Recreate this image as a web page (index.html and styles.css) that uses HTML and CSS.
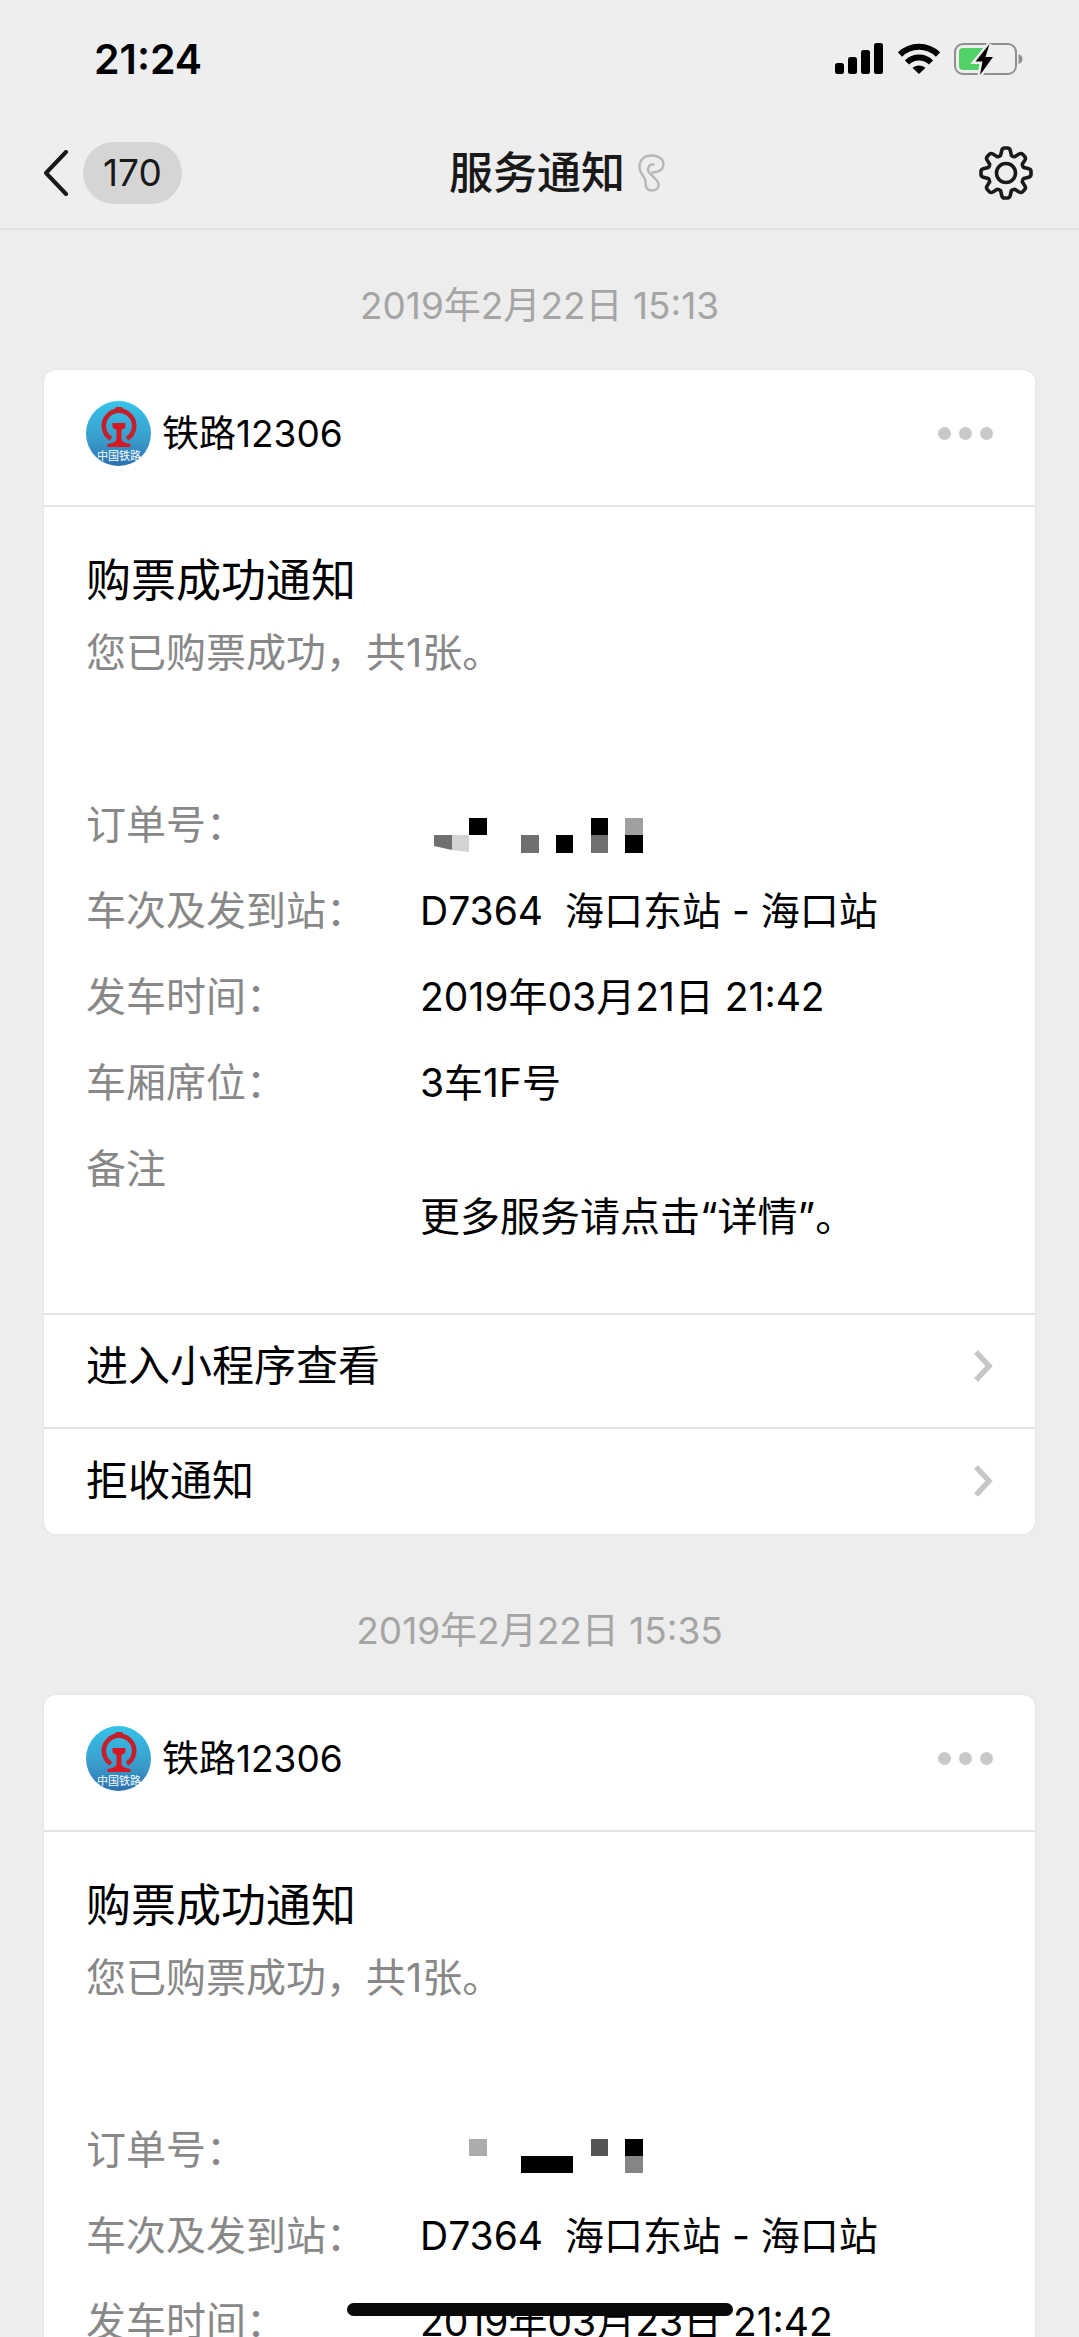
FILE: index.html
```html
<!DOCTYPE html>
<html lang="zh-CN">
<head>
<meta charset="utf-8">
<meta name="viewport" content="width=device-width, initial-scale=1">
<title>服务通知</title>
<link rel="stylesheet" href="styles.css">
</head>
<body>
<svg class="defs" width="0" height="0" aria-hidden="true">
  <defs>
    <linearGradient id="sky" x1="0" y1="0" x2="0" y2="1">
      <stop offset="0" stop-color="#35c3ea"/>
      <stop offset="0.6" stop-color="#3a9ccb"/>
      <stop offset="1" stop-color="#2b70b0"/>
    </linearGradient>
    <symbol id="rail" viewBox="0 0 65 65">
      <circle cx="32.5" cy="32.5" r="32.5" fill="url(#sky)"/>
      <path d="M25 37.700A15.200 15.200 0 1 1 41 37.700" fill="none" stroke="#c4202c" stroke-width="4.600"/>
      <path d="M27.500 9.500L30 6H36L38.500 9.500Z" fill="#c4202c"/>
      <path d="M26.500 22H39.500V26.500L35.500 29V38.500Q36 41.500 44.500 43V46H21.500V43Q30 41.500 30.500 38.500V29L26.500 26.500Z" fill="#d51822"/>
      <text x="33" y="59" text-anchor="middle" font-size="11" fill="#fff">中国铁路</text>
    </symbol>
    <symbol id="chevron" viewBox="0 0 20 34">
      <path d="M3 3L16 17L3 31" fill="none" stroke="#c7c7c9" stroke-width="5.500"/>
    </symbol>
  </defs>
</svg>

<div class="screen">
  <div class="status">
    <time class="clock">21:24</time>
    <div class="indicators">
      <svg width="49" height="32" viewBox="0 0 49 32" role="img" aria-label="信号">
        <rect x="0" y="20" width="9" height="11" rx="2.500"/>
        <rect x="13" y="14" width="9" height="17" rx="2.500"/>
        <rect x="26" y="7" width="9" height="24" rx="2.500"/>
        <rect x="39" y="0" width="9" height="31" rx="2.500"/>
      </svg>
      <svg width="42" height="32" viewBox="0 0 42 32" role="img" aria-label="Wi-Fi">
        <g fill="none" stroke="#000" stroke-width="6">
          <path d="M2 11.500A27 27 0 0 1 40 11.500"/>
          <path d="M9 19.500A17 17 0 0 1 33 19.500"/>
        </g>
        <path d="M21 31L14.500 24.800Q21 20 27.500 24.800Z"/>
      </svg>
      <svg width="69" height="36" viewBox="0 0 69 36" role="img" aria-label="正在充电">
        <rect x="1" y="3" width="61" height="30" rx="8" fill="none" stroke="#8f8f8f" stroke-width="2"/>
        <path d="M64.500 13Q68.500 14.500 68.500 18T64.500 23Z" fill="#8f8f8f"/>
        <rect x="5" y="7" width="26" height="22" rx="4" fill="#50d267"/>
        <path d="M35.500 3L21.500 20.500H28.500L26 34L39 16H31.500Z" fill="#000" stroke="#eee" stroke-width="5" paint-order="stroke"/>
      </svg>
    </div>
  </div>

  <header class="nav">
    <button class="back" type="button" aria-label="返回，170条未读">
      <svg width="26" height="46" viewBox="0 0 26 46"><path d="M23 2L3 23L23 44" fill="none" stroke="#191919" stroke-width="4" stroke-linecap="round" stroke-linejoin="round"/></svg>
      <span class="count">170</span>
    </button>
    <h1 class="heading">服务通知
      <svg width="27" height="38" viewBox="0 0 27 38" role="img" aria-label="听筒模式"><path d="M14.500 18.500C18 18.500 25.500 17 25.500 10C25.500 4.500 20 1.500 13.500 1.500C6 1.500 1.500 6 1.500 13C1.500 20 7.500 23 7.500 27C7.500 31 7.500 36.500 14 36.500C19 36.500 21 33.500 20.500 30C20 24.500 10 20.500 10 15.500C10 11.500 13 10 15.500 10.500" fill="none" stroke="#b7b7b7" stroke-width="2.400" stroke-linecap="round"/></svg>
    </h1>
    <button class="settings" type="button" aria-label="设置">
      <svg width="54" height="54" viewBox="-27 -27 54 54" fill="none" stroke="#191919" stroke-width="3.600" stroke-linejoin="round">
        <path d="M-5.400-17.700L-4.200-22.700Q-3.600-25-1.500-25H1.500Q3.600-25 4.200-22.700L5.400-17.700Q7-16.300 8.700-16.300L13.100-19Q15.100-20.100 16.600-18.700L18.700-16.600Q20.100-15.100 19-13.100L16.300-8.700Q16.300-7 17.700-5.400L22.700-4.200Q25-3.600 25-1.500V1.500Q25 3.600 22.700 4.200L17.700 5.400Q16.300 7 16.300 8.700L19 13.100Q20.100 15.100 18.700 16.600L16.600 18.700Q15.100 20.100 13.100 19L8.700 16.300Q7 16.300 5.400 17.700L4.200 22.700Q3.600 25 1.500 25H-1.500Q-3.600 25-4.200 22.700L-5.400 17.700Q-7 16.300-8.700 16.300L-13.100 19Q-15.100 20.100-16.600 18.700L-18.700 16.600Q-20.100 15.100-19 13.100L-16.300 8.700Q-16.300 7-17.700 5.400L-22.700 4.200Q-25 3.600-25 1.500V-1.500Q-25-3.600-22.700-4.200L-17.700-5.400Q-16.300-7-16.300-8.700L-19-13.100Q-20.100-15.100-18.700-16.600L-16.600-18.700Q-15.100-20.100-13.100-19L-8.700-16.300Q-7-16.300-5.400-17.700Z"/>
        <circle r="9.500"/>
      </svg>
    </button>
  </header>

  <main class="feed">
    <time class="date">2019年2月22日 15:13</time>
    <article class="card">
      <header class="source">
        <svg class="avatar" width="65" height="65"><use href="#rail"/></svg>
        <span class="name">铁路12306</span>
        <button class="more" type="button" aria-label="更多"><i></i><i></i><i></i></button>
      </header>
      <div class="body">
        <h2 class="title">购票成功通知</h2>
        <p class="summary">您已购票成功，共1张。</p>
        <dl class="details">
          <dt>订单号：</dt>
          <dd>
            <svg class="mosaic" width="240" height="48" viewBox="0 0 240 48" role="img" aria-label="已隐藏">
              <path d="M14 34H32V49L14 45Z" fill="#707070"/><path d="M32 34H49V51L32 49Z" fill="#d3d3d3"/>
              <path d="M49 17h18v17h-18zM136 34h17v18h-17zM171 17h17v17h-17zM205 34h18v18h-18z"/>
              <path d="M101 34h18v18h-18zM171 34h17v18h-17z" fill="#707070"/><path d="M205 17h18v17h-18z" fill="#a0a0a0"/>
            </svg>
          </dd>
          <dt>车次及发到站：</dt>
          <dd>D7364&nbsp; 海口东站 - 海口站</dd>
          <dt>发车时间：</dt>
          <dd>2019年03月21日 21:42</dd>
          <dt>车厢席位：</dt>
          <dd>3车1F号</dd>
          <dt>备注</dt>
          <dd class="note"><br>更多服务请点击“详情”。</dd>
        </dl>
      </div>
      <a class="action" href="#open">进入小程序查看<svg width="20" height="34"><use href="#chevron"/></svg></a>
      <a class="action" href="#reject">拒收通知<svg width="20" height="34"><use href="#chevron"/></svg></a>
    </article>

    <time class="date">2019年2月22日 15:35</time>
    <article class="card">
      <header class="source">
        <svg class="avatar" width="65" height="65"><use href="#rail"/></svg>
        <span class="name">铁路12306</span>
        <button class="more" type="button" aria-label="更多"><i></i><i></i><i></i></button>
      </header>
      <div class="body">
        <h2 class="title">购票成功通知</h2>
        <p class="summary">您已购票成功，共1张。</p>
        <dl class="details">
          <dt>订单号：</dt>
          <dd>
            <svg class="mosaic" width="240" height="48" viewBox="0 0 240 48" role="img" aria-label="已隐藏">
              <path d="M49 13h18v17h-18z" fill="#acacac"/><path d="M171 13h17v17h-17z" fill="#555"/><path d="M205 30h18v17h-18z" fill="#858585"/>
              <path d="M101 30h52v17h-52zM205 13h18v17h-18z"/>
            </svg>
          </dd>
          <dt>车次及发到站：</dt>
          <dd>D7364&nbsp; 海口东站 - 海口站</dd>
          <dt>发车时间：</dt>
          <dd>2019年03月23日 21:42</dd>
        </dl>
      </div>
    </article>
  </main>
  <div class="home-bar"></div>
</div>
</body>
</html>
```
FILE: styles.css
```css
* { box-sizing: border-box; }

body {
  margin: 0;
  background: #ededed;
  color: #000;
  font-family: Inter, "Noto Sans CJK SC", sans-serif;
}

h1, h2, p, dl, dd { margin: 0; }

button {
  padding: 0;
  border: 0;
  background: none;
  color: inherit;
  font: inherit;
}

svg { display: block; flex: none; }

.defs { position: absolute; }

.screen {
  position: relative;
  display: flex;
  flex-direction: column;
  height: 100vh;
  overflow: hidden;
}

.status {
  display: flex;
  align-items: center;
  justify-content: space-between;
  height: 117px;
  padding: 0 56px 0 94px;
  background: #eee;
}

.clock {
  font-size: 41px;
  font-weight: 600;
}

.indicators {
  display: flex;
  align-items: center;
  gap: 14px;
}

.nav {
  display: grid;
  grid-template-columns: 1fr auto 1fr;
  align-items: center;
  height: 113px;
  padding: 0 46px 0 43px;
  border-bottom: 2px solid #e2e2e2;
  background: #eee;
}

.back {
  display: flex;
  align-items: center;
  justify-self: start;
  gap: 14px;
}

.count {
  padding: 0 20px;
  border-radius: 31px;
  background: #d5d5d5;
  color: #191919;
  font-size: 37px;
  line-height: 62px;
}

/* the left padding balances the ear icon, so that the words stay centred */
.heading {
  display: flex;
  align-items: center;
  gap: 13px;
  padding-left: 38px;
  color: #191919;
  font-size: 44px;
  font-weight: 500;
  line-height: 48px;
}

.settings { justify-self: end; }

.feed {
  display: flex;
  flex: 1;
  flex-direction: column;
  min-height: 0;
  padding: 8px 44px 0;
  overflow-y: auto;
  scrollbar-width: none;
}

.date {
  flex: none;
  padding: 44px 0 40px;
  color: #a5a5a5;
  font-size: 37px;
  line-height: 48px;
  text-align: center;
}

.card {
  flex: none;
  margin-bottom: 29px;
  border-radius: 12px;
  background: #fff;
  box-shadow: 0 0 2px #d8d8d8;
}

.source {
  display: flex;
  align-items: center;
  gap: 11px;
  height: 137px;
  padding: 0 42px 8px;
  border-bottom: 2px solid #e5e5e5;
}

.name {
  font-size: 37px;
  line-height: 48px;
}

.more {
  display: flex;
  gap: 8px;
  margin-left: auto;
}

.more i {
  width: 13px;
  height: 13px;
  border-radius: 50%;
  background: #c8c8c8;
}

.body { padding: 44px 42px 72px; }

.title {
  font-size: 45px;
  font-weight: 400;
  line-height: 60px;
}

.summary {
  padding-top: 18px;
  color: #888;
  font-size: 40px;
  line-height: 48px;
}

.details {
  display: grid;
  grid-template-columns: 334px 1fr;
  row-gap: 38px;
  padding-top: 124px;
  font-size: 39px;
  line-height: 48px;
}

.details dt {
  color: #888;
  font-size: 40px;
}

.details .note { font-size: 40px; }

.mosaic { overflow: visible; }

.action {
  display: flex;
  align-items: center;
  justify-content: space-between;
  height: 107px;
  padding: 0 42px 2px;
  border-top: 2px solid #e2e2e2;
  color: #000;
  font-size: 42px;
  line-height: 48px;
  text-decoration: none;
}

.action:not(:last-child) {
  height: 114px;
  padding-bottom: 10px;
}

.home-bar {
  position: absolute;
  bottom: 21px;
  left: 50%;
  width: 386px;
  height: 13px;
  margin-left: -193px;
  border-radius: 7px;
  background: #0a0a0a;
}
```
